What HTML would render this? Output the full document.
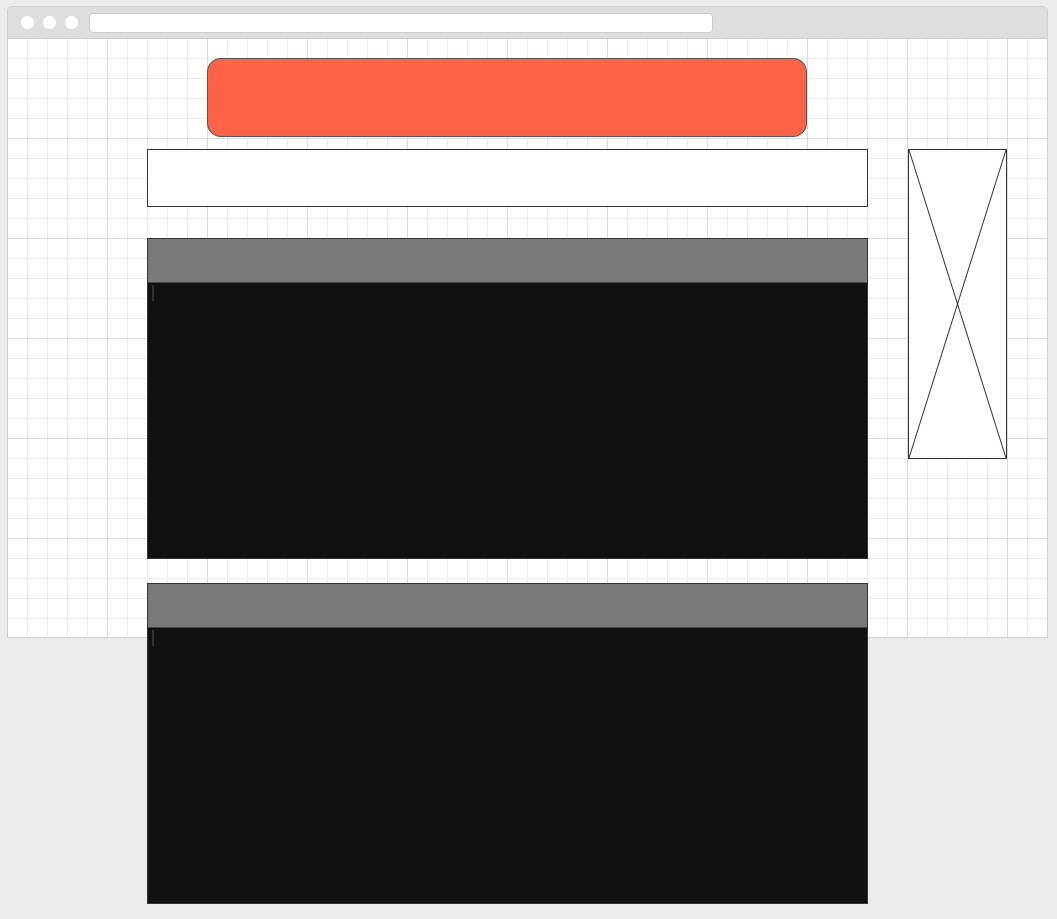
<!DOCTYPE html>
<html><head><style>
html,body{margin:0;padding:0;}
body{width:1057px;height:919px;background:#ececec;position:relative;overflow:hidden;font-family:"Liberation Sans",sans-serif;}
.frame{position:absolute;left:7px;top:6px;width:1039px;height:630px;border:1px solid #d0d0d0;border-radius:5px 5px 0 0;background:#fff;overflow:hidden;}
.bar{position:absolute;left:0;top:0;width:100%;height:31px;background:#dedede;border-bottom:1px solid #ccc;z-index:2;}
.dot{position:absolute;top:9px;width:13px;height:13px;border-radius:50%;background:#fff;}
.url{position:absolute;left:81px;top:6px;width:622px;height:18px;background:#fff;border:1px solid #ccc;border-radius:4px;}
.grid{position:absolute;left:-1px;top:31px;width:1045px;height:600px;
background-image:
linear-gradient(to right,#dcdcdc 1px,transparent 1px),
linear-gradient(to bottom,#dcdcdc 1px,transparent 1px),
linear-gradient(to right,#ececec 1px,transparent 1px),
linear-gradient(to bottom,#ececec 1px,transparent 1px);
background-size:100px 100px,100px 100px,20px 20px,20px 20px;}
.abs{position:absolute;box-sizing:border-box;}
</style></head><body>
<div class="frame">
<div class="bar"><div class="dot" style="left:13px"></div><div class="dot" style="left:35px"></div><div class="dot" style="left:57px"></div><div class="url"></div></div>
<div class="grid"></div>
</div>
<div class="abs" style="left:207px;top:58px;width:600px;height:79px;background:#ff6347;border:1px solid #555;border-radius:14px;"></div>
<div class="abs" style="left:147px;top:149px;width:721px;height:58px;background:#fff;border:1px solid #333;"></div>
<div class="abs" style="left:908px;top:149px;width:99px;height:310px;background:#fff;border:1px solid #333;">
<svg width="97" height="308" style="position:absolute;left:0;top:0"><line x1="0" y1="0" x2="97" y2="308" stroke="#333" stroke-width="1"/><line x1="97" y1="0" x2="0" y2="308" stroke="#333" stroke-width="1"/></svg></div>
<div class="abs" style="left:147px;top:238px;width:721px;height:321px;background:#111;border:1px solid #333;">
<div style="height:43px;background:#7a7a7a;border-bottom:1px solid #444;"></div>
<div style="position:absolute;left:4px;top:46px;width:2px;height:16px;background:#333;"></div></div>
<div class="abs" style="left:147px;top:583px;width:721px;height:321px;background:#111;border:1px solid #333;">
<div style="height:43px;background:#7a7a7a;border-bottom:1px solid #444;"></div>
<div style="position:absolute;left:4px;top:46px;width:2px;height:16px;background:#333;"></div></div>
</body></html>
